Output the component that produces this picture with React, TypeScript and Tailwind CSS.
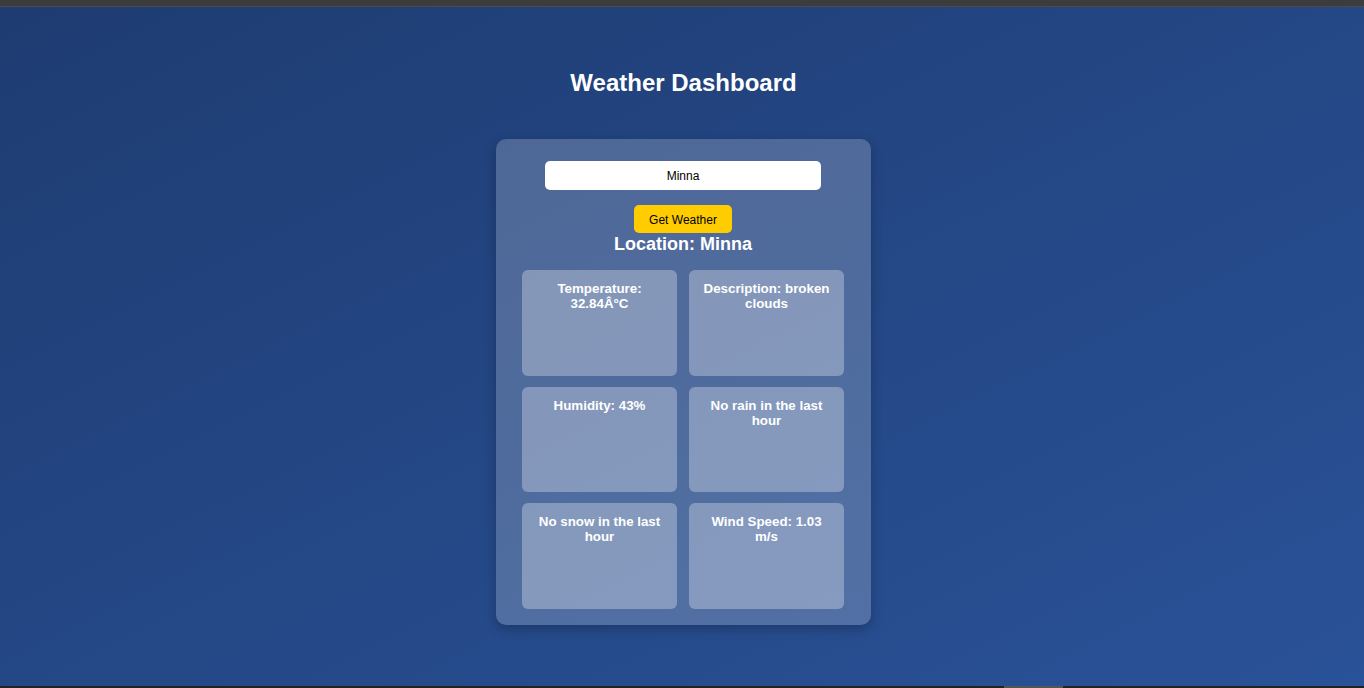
import { useState } from "react";

type Reading = {
  label: string;
};

const readings: Reading[] = [
  { label: "Temperature: 32.84Â°C" },
  { label: "Description: broken clouds" },
  { label: "Humidity: 43%" },
  { label: "No rain in the last hour" },
  { label: "No snow in the last hour" },
  { label: "Wind Speed: 1.03 m/s" },
];

const App = () => {
  const [city, setCity] = useState("Minna");

  return (
    <div className="w-full h-[688px] flex flex-col overflow-hidden font-['Liberation_Sans',Arial,sans-serif]">
      {/* window top strip */}
      <div className="h-[6px] bg-[#3c3c3c] flex-shrink-0"></div>
      <div className="h-[1px] bg-[#4b4b4b] flex-shrink-0"></div>

      {/* Page */}
      <div className="flex-1 min-h-0 bg-gradient-to-br from-[#1e3c72] to-[#2a5298] flex flex-col items-center pt-[62px] pl-[3px]">
        <h1 className="text-white font-bold text-[24px] leading-[28px]">
          Weather Dashboard
        </h1>

        {/* Weather Card */}
        <div className="mt-[42px] w-[375px] h-[486px] bg-white/20 rounded-[10px] shadow-[0_4px_12px_rgba(0,0,0,0.25)] pt-[22px] pl-[26px] pr-[27px] pb-[16px] flex flex-col items-center">
          <input
            value={city}
            onChange={(e) => setCity(e.target.value)}
            className="w-[276px] h-[29px] bg-white rounded-[5px] text-center text-[12px] text-black outline-none"
          />
          <button className="mt-[15px] w-[98px] h-[28px] pt-[2px] bg-[#ffcc00] rounded-[5px] text-[12px] text-black">
            Get Weather
          </button>
          <h2 className="text-white font-bold text-[18px] leading-[22px]">
            Location: {city}
          </h2>

          <div className="mt-[15px] w-full grid grid-cols-2 gap-x-[12px] gap-y-[11px]">
            {readings.map((item) => (
              <div
                key={item.label}
                className="h-[105.67px] bg-white/30 rounded-[6px] pt-[11px] px-[10px] text-center text-white font-bold text-[13.33px] leading-[15px]"
              >
                {item.label}
              </div>
            ))}
          </div>
        </div>
      </div>

      {/* bottom strip with scrollbar thumb */}
      <div className="h-[2px] bg-[#222222] flex-shrink-0 flex">
        <div className="ml-[1004px] w-[59px] h-full bg-[#555555]"></div>
      </div>
    </div>
  );
};

export default App;
